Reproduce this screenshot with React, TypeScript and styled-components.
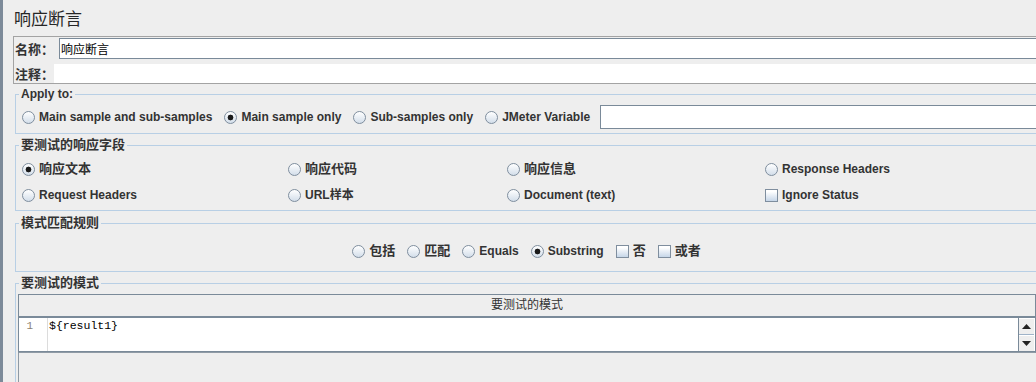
import styled, { createGlobalStyle } from 'styled-components';

const GlobalStyle = createGlobalStyle`
  html, body {
    margin: 0;
    padding: 0;
    background: #eeeeee;
    overflow: hidden;
  }
  body {
    font-family: "Liberation Sans", "Noto Sans CJK SC", sans-serif;
    color: #333333;
  }
`;

const Frame = styled.div`
  display: flex;
  width: 1040px;
  height: 382px;
  overflow: hidden;
  background: #eeeeee;
`;

const SideBar = styled.div`
  flex: none;
  width: 3px;
  background: #7c8a99;
`;

const Main = styled.div`
  flex: 1;
  min-width: 0;
  display: flex;
  flex-direction: column;
  padding-left: 10px;
`;

const Title = styled.div`
  height: 36px;
  line-height: 36px;
  padding-left: 1px;
  font-family: "Noto Sans CJK SC", sans-serif;
  font-size: 17px;
  color: #262626;
`;

const NameBox = styled.div`
  display: flex;
  flex-direction: column;
  border: 1px solid #a3a3a3;
`;

const FieldRow = styled.div<{ $h: number; $mt: number }>`
  display: flex;
  height: ${(p) => p.$h}px;
  margin-top: ${(p) => p.$mt}px;
`;

const FieldLabel = styled.label<{ $w: number }>`
  flex: none;
  width: ${(p) => p.$w}px;
  box-sizing: border-box;
  padding-left: 1px;
  display: flex;
  align-items: center;
  font: bold 13px "Noto Sans CJK SC", sans-serif;
  color: #333;
`;

const TextInput = styled.input<{ $framed?: boolean }>`
  flex: 1;
  min-width: 0;
  margin: 0;
  padding: 0 0 0 1px;
  box-sizing: border-box;
  background: #ffffff;
  border: ${(p) => (p.$framed ? '1px solid #7a8a99' : 'none')};
  border-right: none;
  outline: none;
  font: 12px "Noto Sans CJK SC", sans-serif;
  color: #000;
`;

const Group = styled.fieldset<{ $mt: number; $pad: string; $h?: number }>`
  margin: ${(p) => p.$mt}px 0 0 2px;
  padding: ${(p) => p.$pad};
  border: 1px solid #b8cfe5;
  min-width: 0;
  flex: none;
  ${(p) => (p.$h ? `height: ${p.$h}px;` : '')}
`;

const Legend = styled.legend<{ $cjk?: boolean; $ml?: number }>`
  margin-left: ${(p) => p.$ml ?? -3}px;
  padding: 0 2px;
  line-height: 14px;
  font-weight: bold;
  font-size: ${(p) => (p.$cjk ? 13 : 12)}px;
  color: #333;
`;

const OptionRow = styled.div<{ $center?: boolean }>`
  display: flex;
  align-items: center;
  justify-content: ${(p) => (p.$center ? 'center' : 'flex-start')};
  gap: 12px;
  height: 24px;
`;

const FieldGrid = styled.div`
  display: grid;
  grid-template-columns: 266px 219px 258px 1fr;
  grid-auto-rows: 26px;
  align-items: center;
`;

const Option = styled.label<{ $cjk?: boolean }>`
  display: inline-flex;
  align-items: center;
  gap: 4px;
  white-space: nowrap;
  font-weight: bold;
  font-size: ${(p) => (p.$cjk ? 13 : 12)}px;
  line-height: 16px;
  color: #333;
`;

const RadioDot = styled.span<{ $on?: boolean }>`
  flex: none;
  width: 13px;
  height: 13px;
  box-sizing: border-box;
  border-radius: 50%;
  border: 1px solid #7f8e9e;
  background: ${(p) =>
    p.$on
      ? 'radial-gradient(circle, #1a1a1a 0 2.6px, transparent 3.2px), linear-gradient(#ffffff, #d3deea)'
      : 'linear-gradient(#ffffff, #d3deea)'};
`;

const CheckBox = styled.span`
  flex: none;
  width: 13px;
  height: 13px;
  box-sizing: border-box;
  border: 1px solid #7f8e9e;
  background: linear-gradient(#ffffff 15%, #c6d6e8);
`;

const VarInput = styled.input`
  flex: 1;
  min-width: 0;
  height: 24px;
  margin: 0 0 0 -2px;
  padding: 0;
  box-sizing: border-box;
  background: #fff;
  border: 1px solid #7a8a99;
  border-right: none;
  outline: none;
`;

const PatternTable = styled.div`
  border: 1px solid #7a8a99;
  border-bottom-color: #8f9aa5;
`;

const TableHeader = styled.div`
  height: 21px;
  line-height: 21px;
  text-align: center;
  font: 12px "Noto Sans CJK SC", sans-serif;
  color: #333;
  border-bottom: 2px solid #7a8a99;
`;

const EditorRow = styled.div`
  display: flex;
  height: 33px;
  background: #ffffff;
  border-bottom: 1px solid #7a8a99;
`;

const Gutter = styled.div`
  flex: none;
  width: 29px;
  box-sizing: border-box;
  padding-right: 14px;
  text-align: right;
  border-right: 1px solid #dcdcdc;
  font: 11px "Liberation Mono", monospace;
  line-height: 16px;
  color: #8a7f72;
`;

const Code = styled.div`
  flex: 1;
  padding-left: 1px;
  font: 11.5px "Liberation Mono", monospace;
  line-height: 16px;
  color: #000;
`;

const ScrollBar = styled.div`
  flex: none;
  width: 15px;
  margin-right: 1px;
  display: flex;
  flex-direction: column;
  border-left: 1px solid #7a8a99;
  background: #eeeeee;
`;

const ArrowButton = styled.div`
  height: 16px;
  display: flex;
  align-items: center;
  justify-content: center;
  box-sizing: border-box;
  border-top: 1px solid #ffffff;
`;

const ScrollSep = styled.div`
  height: 1px;
  background: #9fb3c8;
`;

const Filler = styled.div`
  height: 40px;
  border-left: 1px solid #8e99a4;
`;

function Radio({ label, on, cjk }: { label: string; on?: boolean; cjk?: boolean }) {
  return (
    <Option $cjk={cjk}>
      <RadioDot $on={on} />
      {label}
    </Option>
  );
}

function Check({ label, cjk }: { label: string; cjk?: boolean }) {
  return (
    <Option $cjk={cjk}>
      <CheckBox />
      {label}
    </Option>
  );
}

function Arrow({ up }: { up?: boolean }) {
  return (
    <svg width="9" height="5" viewBox="0 0 9 5">
      <polygon points={up ? '4.5,0 9,5 0,5' : '0,0 9,0 4.5,5'} fill="#222" />
    </svg>
  );
}

export default function App() {
  return (
    <>
      <GlobalStyle />
      <Frame>
        <SideBar />
        <Main>
          <Title>响应断言</Title>

          <NameBox>
            <FieldRow $h={21} $mt={1}>
              <FieldLabel $w={45}>名称：</FieldLabel>
              <TextInput $framed readOnly defaultValue="响应断言" />
            </FieldRow>
            <FieldRow $h={19} $mt={5}>
              <FieldLabel $w={40}>注释：</FieldLabel>
              <TextInput readOnly defaultValue="" />
            </FieldRow>
          </NameBox>

          <Group $mt={3} $pad="4px 0 4px 6px">
            <Legend>Apply to:</Legend>
            <OptionRow>
              <Radio label="Main sample and sub-samples" />
              <Radio label="Main sample only" on />
              <Radio label="Sub-samples only" />
              <Radio label="JMeter Variable" />
              <VarInput readOnly />
            </OptionRow>
          </Group>

          <Group $mt={4} $pad="4px 0 2px 6px">
            <Legend $cjk>要测试的响应字段</Legend>
            <FieldGrid>
              <Radio label="响应文本" on cjk />
              <Radio label="响应代码" cjk />
              <Radio label="响应信息" cjk />
              <Radio label="Response Headers" />
              <Radio label="Request Headers" />
              <Radio label="URL样本" />
              <Radio label="Document (text)" />
              <Check label="Ignore Status" />
            </FieldGrid>
          </Group>

          <Group $mt={5} $pad="9px 8px 8px 6px">
            <Legend $cjk>模式匹配规则</Legend>
            <OptionRow $center>
              <Radio label="包括" cjk />
              <Radio label="匹配" cjk />
              <Radio label="Equals" />
              <Radio label="Substring" on />
              <Check label="否" cjk />
              <Check label="或者" cjk />
            </OptionRow>
          </Group>

          <Group $mt={4} $pad="4px 3px 0 2px" $h={140}>
            <Legend $cjk $ml={1}>要测试的模式</Legend>
            <PatternTable>
              <TableHeader>要测试的模式</TableHeader>
              <EditorRow>
                <Gutter>1</Gutter>
                <Code>{'${result1}'}</Code>
                <ScrollBar>
                  <ArrowButton>
                    <Arrow up />
                  </ArrowButton>
                  <ScrollSep />
                  <ArrowButton>
                    <Arrow />
                  </ArrowButton>
                </ScrollBar>
              </EditorRow>
            </PatternTable>
            <Filler />
          </Group>
        </Main>
      </Frame>
    </>
  );
}
